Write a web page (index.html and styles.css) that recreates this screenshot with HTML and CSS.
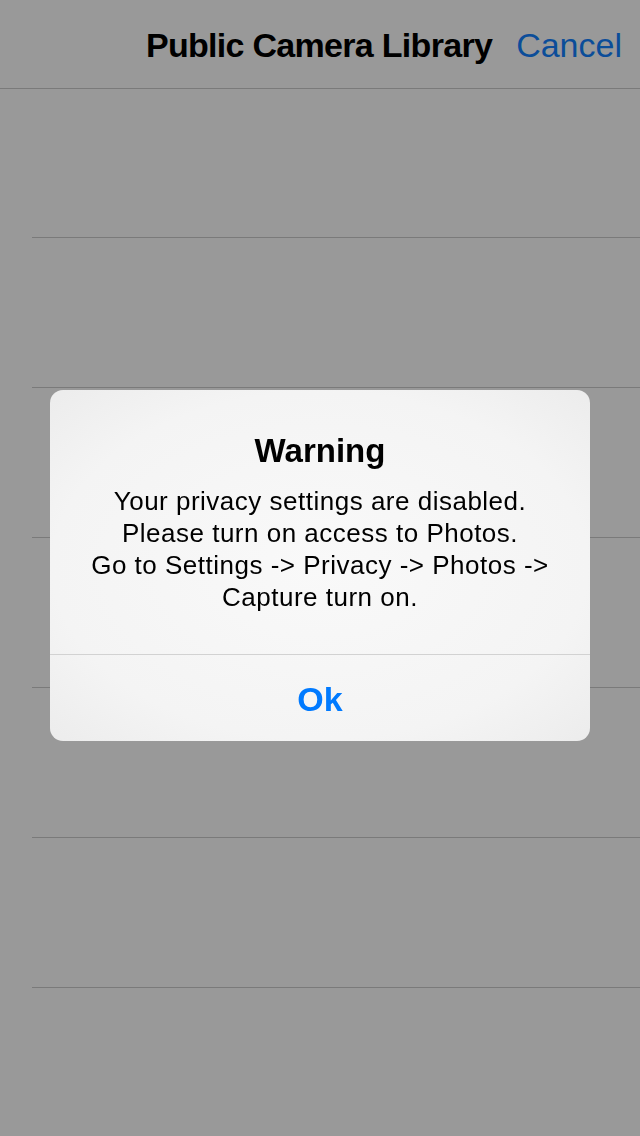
FILE: index.html
```html
<!DOCTYPE html>
<html>
<head>
    <title>Public Camera Library</title>
    <meta name="viewport" content="width=device-width, initial-scale=1.0">
    <link rel="stylesheet" href="styles.css">
</head>
<body>
    <!-- navigation bar -->
    <div class="nav-bar">
        <span class="nav-title">Public Camera Library</span>
        <span class="nav-cancel">Cancel</span>
    </div>

    <!-- empty library rows -->
    <div class="row-list">
        <div class="row"></div>
        <div class="row"></div>
        <div class="row"></div>
        <div class="row"></div>
        <div class="row"></div>
        <div class="row"></div>
    </div>

    <!-- alert over the dimmed page -->
    <div class="overlay">
        <div class="alert">
            <div class="alert-body">
                <div class="alert-title">Warning</div>
                <div class="alert-message">
                    Your privacy settings are disabled.<br>
                    Please turn on access to Photos.<br>
                    Go to Settings -&gt; Privacy -&gt; Photos -&gt;<br>
                    Capture turn on.
                </div>
            </div>
            <div class="alert-button">Ok</div>
        </div>
    </div>
</body>
</html>
```

FILE: styles.css
```css
body {
    font-family: "Liberation Sans", Arial, sans-serif;
    background-color: #999999; /* white page, dimmed by the alert */
    margin: 0;
    height: 1136px;
    overflow: hidden;
}

/* Top bar */
.nav-bar {
    display: flex;
    justify-content: flex-end;
    align-items: center;
    gap: 24px;
    height: 86px;
    padding: 2px 18px 0 0;
    border-bottom: 1px solid #7a7a7a;
    font-size: 34px;
    line-height: 40px;
}

.nav-title {
    font-weight: bold;
    color: #000000;
    letter-spacing: -0.7px; /* narrower, like the system title font */
}

.nav-cancel {
    color: #0b4d99;
}

/* Rows of the library */
.row-list {
    padding-left: 32px;
}

.row {
    height: 149px;
    border-bottom: 1px solid #7a7a7a;
}

.row:first-child {
    height: 148px;
}

/* Alert overlay */
.overlay {
    position: fixed;
    top: 0;
    left: 0;
    width: 100%;
    height: 100%;
    display: flex;
    justify-content: center;
    align-items: flex-start;
    padding-top: 390px;
    box-sizing: border-box;
}

.alert {
    width: 540px;
    border-radius: 13px;
    background: radial-gradient(ellipse at center, #f9f9f9 0%, #f4f4f4 70%, #ececec 100%);
    overflow: hidden;
    text-align: center;
    color: #000000;
}

.alert-body {
    padding: 41px 10px 41px;
    border-bottom: 1px solid #d2d2d2;
}

.alert-title {
    font-size: 33px;
    line-height: 40px;
    font-weight: bold;
    margin-bottom: 14px;
}

.alert-message {
    font-size: 26px;
    line-height: 32px;
    letter-spacing: 0.5px;
}

.alert-button {
    height: 83px;
    padding-top: 3px;
    line-height: 83px;
    font-size: 34px;
    font-weight: bold;
    color: #007aff;
}
```
